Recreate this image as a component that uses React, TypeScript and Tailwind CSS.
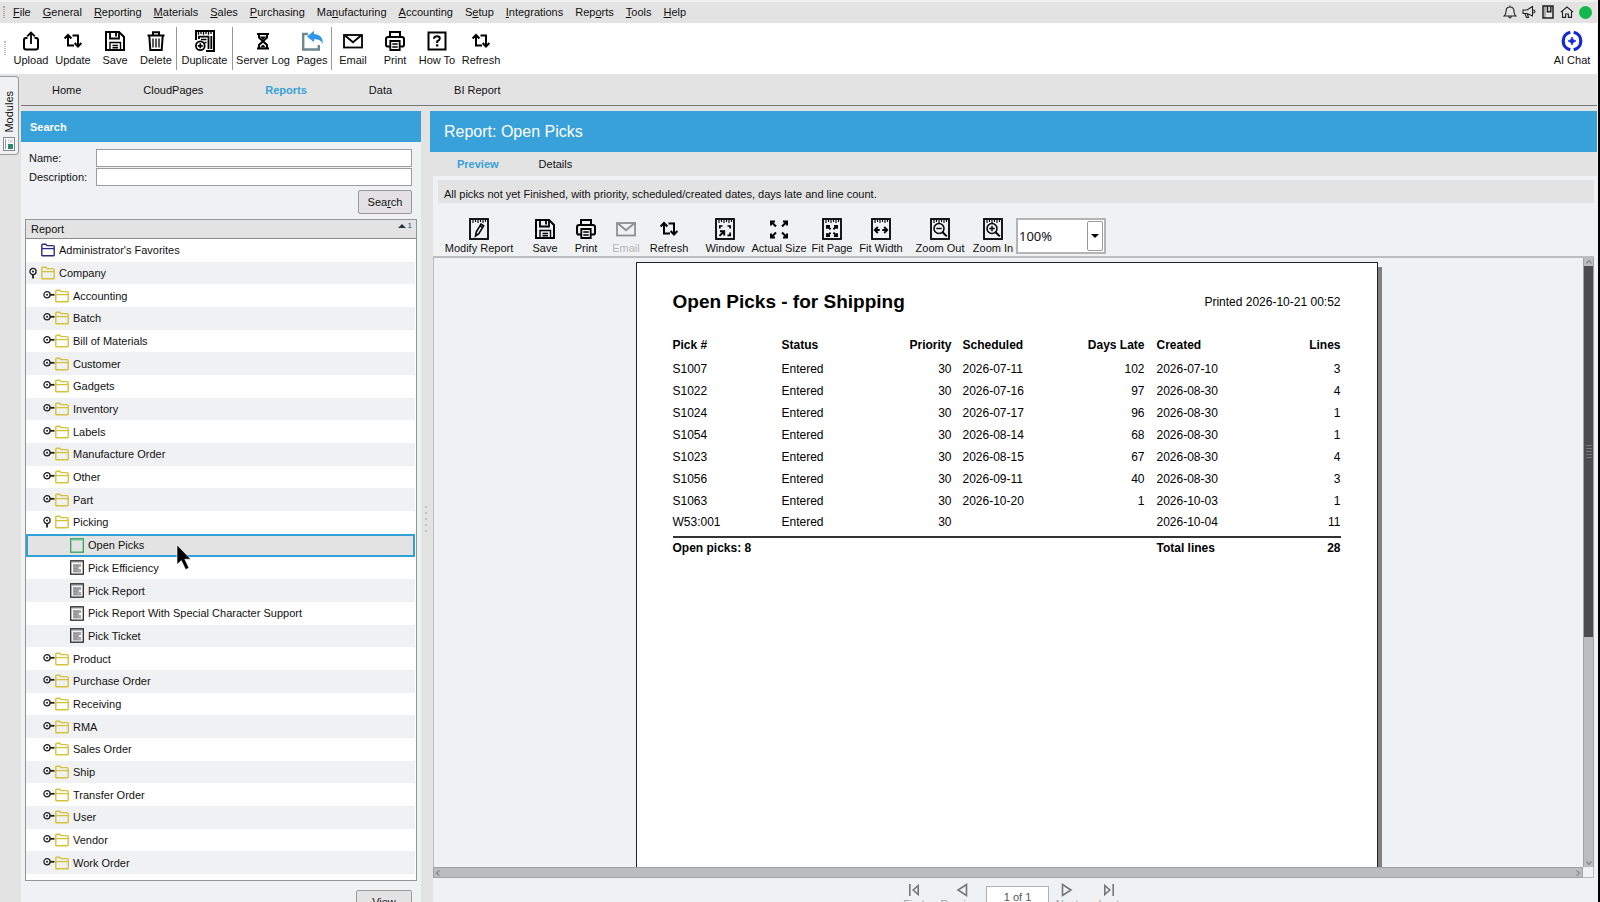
import type { ReactNode } from "react";

type IconProps = { children: ReactNode; className?: string };

function Icon({ children, className = "" }: IconProps) {
  return (
    <svg
      viewBox="0 0 22 22"
      className={`h-[22px] w-[22px] shrink-0 ${className}`}
      fill="none"
      stroke="currentColor"
      strokeWidth="2"
      aria-hidden="true"
    >
      {children}
    </svg>
  );
}

function NotepadFrame() {
  return (
    <>
      <rect x="2" y="1" width="18" height="20" strokeWidth="1.8" />
      <path d="M5 1.5V5M7.5 1.5V4M10 1.5V5M12.5 1.5V4M15 1.5V5M17.5 1.5V4" strokeWidth="1.1" />
    </>
  );
}

const UploadIcon = () => (
  <Icon>
    <path d="M7.5 8H6Q4 8 4 10V17.5Q4 19.5 6 19.5H16Q18 19.5 18 17.5V10Q18 8 16 8H14.5" />
    <path d="M11 14V3M7.2 6.3L11 2.5L14.8 6.3" strokeWidth="1.8" />
  </Icon>
);

const RefreshIcon = () => (
  <Icon>
    <path d="M6 5.5V15.5H12M2.6 8.5L6 5L9.4 8.5" />
    <path d="M10.5 5.5H16V15.5M12.6 13L16 16.5L19.4 13" />
  </Icon>
);

const SaveIcon = () => (
  <Icon>
    <path d="M2 2H15L20 7V20H2Z" />
    <path d="M6 2V8.5H15V2M12 3V6.5" strokeWidth="1.8" />
    <path d="M6 20V12.5H16.5V20M8.5 15.5H14M8.5 17.8H14" strokeWidth="1.4" />
  </Icon>
);

const TrashIcon = () => (
  <Icon>
    <path d="M2.5 5.5H19.5M8 5V2.2H14V5" />
    <path d="M4.3 6L5.3 20H16.7L17.7 6" />
    <path d="M8 8.5V17.5M11 8.5V17.5M14 8.5V17.5" strokeWidth="1.3" />
  </Icon>
);

const DuplicateIcon = () => (
  <Icon>
    <path d="M2 10V1H20V21H12" strokeWidth="2" />
    <path d="M4.5 1V4.8M7 1V4M9.5 1V4.8M12 1V4M14.5 1V4.8M17 1V4" strokeWidth="1.3" />
    <path d="M5 9V6.7H14.5V19M17.3 6V19" strokeWidth="1.8" />
    <path d="M7 9.5H12.5M10.5 12.5H12.5" strokeWidth="1.5" />
    <circle cx="6.3" cy="15.8" r="4.4" strokeWidth="1.8" fill="white" />
    <path d="M6.3 13.3V18.3M3.8 15.8H8.8" strokeWidth="1.7" />
  </Icon>
);

const HourglassIcon = () => (
  <Icon>
    <path d="M5 4H17M5 18.5H17" strokeWidth="2.2" />
    <path d="M7 5V7.5L15 15V18M15 5V7.5L7 15V18" strokeWidth="2" />
    <path d="M8 6.5H14L11 10ZM8 17.5L11 14.5L14 17.5Z" fill="currentColor" stroke="none" />
  </Icon>
);

const PagesIcon = () => (
  <Icon>
    <path d="M7 4H2.2V19.5H17.8V15" stroke="#6f8790" strokeWidth="2.4" />
    <path
      d="M6 6.5L13 0.8V4C18.5 4.2 21.8 7 22 14C20.2 10.5 17.5 9.3 13 9.3V12.2Z"
      fill="#2f97e8"
      stroke="none"
    />
  </Icon>
);

const MailIcon = () => (
  <Icon>
    <rect x="2" y="5" width="18" height="12.5" strokeWidth="1.8" />
    <path d="M3 5.5L11 12.3L19 5.5" strokeWidth="1.8" />
  </Icon>
);

const PrintIcon = () => (
  <Icon>
    <path d="M6 6.5V2H16V6.5" />
    <path d="M6 16.5H3.8Q2 16.5 2 14.7V9.3Q2 7 4.3 7H17.7Q20 7 20 9.3V14.7Q20 16.5 18.2 16.5H16" />
    <path d="M6.3 11H15.7V20H6.3Z" strokeWidth="1.8" />
    <path d="M8.3 14H13.7M8.3 17H13.7" strokeWidth="1.4" />
  </Icon>
);

const HelpIcon = () => (
  <Icon>
    <rect x="2.5" y="2.5" width="17" height="17" strokeWidth="2" />
    <path d="M8 8.8Q8 6.2 11 6.2Q13.8 6.2 13.8 8.5Q13.8 10 11.2 11.3V13" strokeWidth="2" />
    <path d="M10 14.3H12.3V16.5H10Z" fill="currentColor" stroke="none" />
  </Icon>
);

const ModifyIcon = () => (
  <Icon>
    <NotepadFrame />
    <path d="M7.5 18L8.2 14L13 6.2L15.6 7.8L10.8 15.6Z" strokeWidth="1.6" />
    <path d="M12 8L14.6 9.6" strokeWidth="1.2" />
  </Icon>
);

const WindowIcon = () => (
  <Icon>
    <NotepadFrame />
    <path d="M5.8 10.5V8H8.5M13.5 8H16.2V10.5M16.2 14.5V17.3H13.5" strokeWidth="1.7" />
    <path d="M5.5 17.8L9.5 13.8M6 13.2H10.2V17.5" strokeWidth="1.9" />
  </Icon>
);

const ActualSizeIcon = () => (
  <Icon>
    <path d="M3 7.5V3.5H7M3.2 3.7L8 8.5M15 3.5H19V7.5M18.8 3.7L14 8.5M3 15.5V19.5H7M3.2 19.3L8 14.5M15 19.5H19V15.5M18.8 19.3L14 14.5" />
  </Icon>
);

const FitPageIcon = () => (
  <Icon>
    <NotepadFrame />
    <path
      d="M6 10.7V8H9M6 8L9.6 11.2M13 8H16V10.7M16 8L12.4 11.2M6 15.3V18H9M6 18L9.6 14.6M13 18H16V15.3M16 18L12.4 14.6"
      strokeWidth="1.9"
    />
  </Icon>
);

const FitWidthIcon = () => (
  <Icon>
    <NotepadFrame />
    <path d="M5 12H9.7M17 12H12.3M7.8 9L4.8 12L7.8 15M14.2 9L17.2 12L14.2 15" strokeWidth="1.8" />
  </Icon>
);

function ZoomIcon({ plus }: { plus?: boolean }) {
  return (
    <Icon>
      <NotepadFrame />
      <circle cx="10" cy="10.5" r="5" strokeWidth="1.5" fill="#f0f1f3" />
      <path d="M13.6 14.2L17.8 18.4" strokeWidth="2" />
      <path d={plus ? "M7.3 10.5H12.7M10 7.8V13.2" : "M7.3 10.5H12.7"} strokeWidth="1.4" />
    </Icon>
  );
}

type Tool = { label: string; icon: ReactNode; width: string; disabled?: boolean };

function ToolButton({ label, icon, width, disabled }: Tool) {
  return (
    <button
      type="button"
      disabled={disabled}
      className={`flex shrink-0 flex-col items-center gap-px whitespace-nowrap leading-[14px] ${width} ${
        disabled ? "text-[#b5b5b5]" : ""
      }`}
    >
      <span className={disabled ? "text-[#8f8f8f]" : "text-black"}>{icon}</span>
      {label}
    </button>
  );
}

const menus: [string, string, string][] = [
  ["", "F", "ile"],
  ["", "G", "eneral"],
  ["", "R", "eporting"],
  ["", "M", "aterials"],
  ["", "S", "ales"],
  ["", "P", "urchasing"],
  ["Ma", "n", "ufacturing"],
  ["", "A", "ccounting"],
  ["S", "e", "tup"],
  ["", "I", "ntegrations"],
  ["Rep", "o", "rts"],
  ["", "T", "ools"],
  ["", "H", "elp"],
];

const mainTools: Tool[][] = [
  [
    { label: "Upload", icon: <UploadIcon />, width: "w-[42px]" },
    { label: "Update", icon: <RefreshIcon />, width: "w-[42px]" },
    { label: "Save", icon: <SaveIcon />, width: "w-[42px]" },
    { label: "Delete", icon: <TrashIcon />, width: "w-[40px]" },
  ],
  [{ label: "Duplicate", icon: <DuplicateIcon />, width: "w-[55px]" }],
  [
    { label: "Server Log", icon: <HourglassIcon />, width: "w-[60px]" },
    { label: "Pages", icon: <PagesIcon />, width: "w-[38px]" },
  ],
  [
    { label: "Email", icon: <MailIcon />, width: "w-[42px]" },
    { label: "Print", icon: <PrintIcon />, width: "w-[42px]" },
    { label: "How To", icon: <HelpIcon />, width: "w-[42px]" },
    { label: "Refresh", icon: <RefreshIcon />, width: "w-[46px]" },
  ],
];

const reportTools: Tool[][] = [
  [{ label: "Modify Report", icon: <ModifyIcon />, width: "w-[78px]" }],
  [
    { label: "Save", icon: <SaveIcon />, width: "w-[42px]" },
    { label: "Print", icon: <PrintIcon />, width: "w-[40px]" },
    { label: "Email", icon: <MailIcon />, width: "w-[40px]", disabled: true },
    { label: "Refresh", icon: <RefreshIcon />, width: "w-[46px]" },
  ],
  [
    { label: "Window", icon: <WindowIcon />, width: "w-[54px]" },
    { label: "Actual Size", icon: <ActualSizeIcon />, width: "w-[54px]" },
    { label: "Fit Page", icon: <FitPageIcon />, width: "w-[52px]" },
    { label: "Fit Width", icon: <FitWidthIcon />, width: "w-[46px]" },
  ],
  [
    { label: "Zoom Out", icon: <ZoomIcon />, width: "w-[60px]" },
    { label: "Zoom In", icon: <ZoomIcon plus />, width: "w-[46px]" },
  ],
];

type Node = { name: string; level: 0 | 1 | 2; kind: "favorites" | "folder" | "report"; open?: boolean };

const folder = (name: string): Node => ({ name, level: 1, kind: "folder" });
const report = (name: string): Node => ({ name, level: 2, kind: "report" });

const nodes: Node[] = [
  { name: "Administrator's Favorites", level: 0, kind: "favorites" },
  { name: "Company", level: 0, kind: "folder", open: true },
  ...[
    "Accounting",
    "Batch",
    "Bill of Materials",
    "Customer",
    "Gadgets",
    "Inventory",
    "Labels",
    "Manufacture Order",
    "Other",
    "Part",
  ].map(folder),
  { name: "Picking", level: 1, kind: "folder", open: true },
  ...["Open Picks", "Pick Efficiency", "Pick Report", "Pick Report With Special Character Support", "Pick Ticket"].map(
    report,
  ),
  ...[
    "Product",
    "Purchase Order",
    "Receiving",
    "RMA",
    "Sales Order",
    "Ship",
    "Transfer Order",
    "User",
    "Vendor",
    "Work Order",
  ].map(folder),
];

function FolderIcon({ color }: { color: string }) {
  return (
    <svg viewBox="0 0 14 14" className={`h-[14px] w-[14px] shrink-0 ${color}`} fill="none" stroke="currentColor" aria-hidden="true">
      <path d="M0.8 12V2.2Q0.8 1.2 1.8 1.2H4.8L6 2.6H12Q13.2 2.6 13.2 3.8V12Q13.2 12.8 12.2 12.8H1.8Q0.8 12.8 0.8 12Z" strokeWidth="1.4" />
      <path d="M1 5.6H13" strokeWidth="1.3" />
    </svg>
  );
}

function ReportIcon({ selected }: { selected: boolean }) {
  return (
    <svg
      viewBox="0 0 14 15"
      className={`h-[15px] w-[14px] shrink-0 ${selected ? "text-[#2fa45c]" : "text-[#2b2b2b]"}`}
      fill="none"
      stroke="currentColor"
      aria-hidden="true"
    >
      <rect x="0.7" y="0.8" width="12.6" height="13.4" strokeWidth="1.3" />
      <path d="M2.5 2H12" strokeWidth="1.2" strokeDasharray="1 1" />
      {!selected && (
        <>
          <path d="M3 4H11V7H9V9H11V12.5H3Z" fill="#a5a5a5" stroke="none" />
          <path d="M4 6H8M4 8.5H7M4 11H7" stroke="#8c8c8c" strokeWidth="1" />
        </>
      )}
    </svg>
  );
}

function Handle({ open }: { open?: boolean }) {
  return (
    <svg viewBox="0 0 12 12" className="h-3 w-3" fill="none" stroke="#222" aria-hidden="true">
      {open ? (
        <>
          <circle cx="4" cy="4.5" r="3.1" strokeWidth="1.3" />
          <path d="M4 7.5V11.5" strokeWidth="1.8" />
          <circle cx="4" cy="4.5" r="1" fill="#222" stroke="none" />
        </>
      ) : (
        <>
          <circle cx="4" cy="4.8" r="3.1" strokeWidth="1.3" />
          <path d="M7 4.8H11.5" strokeWidth="1.8" />
          <circle cx="4" cy="4.8" r="1" fill="#222" stroke="none" />
        </>
      )}
    </svg>
  );
}

const indents = ["pl-[3px]", "pl-[17px]", "pl-[32px]"];

function TreeRow({ node, index }: { node: Node; index: number }) {
  const selected = node.name === "Open Picks";
  return (
    <li
      role="treeitem"
      aria-level={node.level + 1}
      aria-selected={selected}
      className={`relative flex min-h-0 items-center ${selected ? "bg-[#e3e3e3] outline-2 -outline-offset-2 outline-[#2fa1d9]" : index % 2 ? "bg-[#f0f1f3]" : "bg-white"} ${indents[node.level]}`}
    >
      <span className="flex w-3 shrink-0">
        {node.kind === "folder" && (
          <button type="button" aria-label={`Toggle ${node.name}`}>
            <Handle open={node.open} />
          </button>
        )}
      </span>
      <button type="button" className="flex items-center gap-1 whitespace-nowrap">
        {node.kind === "report" ? (
          <ReportIcon selected={selected} />
        ) : (
          <FolderIcon color={node.kind === "favorites" ? "text-[#2f2a80]" : "text-[#d3c33a]"} />
        )}
        {node.name}
      </button>
      {selected && (
        <svg viewBox="0 0 16 28" className="absolute top-2.5 left-[150px] z-10 h-7 w-4" aria-hidden="true">
          <path d="M1 1V20.5L5.3 16.6L9.6 25.6L13 24L8.8 15.2H14.8Z" fill="#000" stroke="#fff" strokeWidth="0.6" />
        </svg>
      )}
    </li>
  );
}

function SearchPanel() {
  return (
    <section className="flex flex-col bg-[#f0f1f3]">
      <h2 className="flex h-[31px] items-center bg-[#38a1d9] px-[9px] font-bold text-white">Search</h2>
      <form className="grid grid-cols-[67px_1fr] items-center gap-y-px pt-[7px] pr-[9px] pl-2">
        <label htmlFor="name">Name:</label>
        <input id="name" className="h-[18px] border border-[#9c9c9c] bg-white px-1" />
        <label htmlFor="description">Description:</label>
        <input id="description" className="h-[18px] border border-[#9c9c9c] bg-white px-1" />
        <button
          type="button"
          className="col-span-2 mt-[3px] h-6 w-[54px] justify-self-end rounded-xs border border-[#9a9a9a] bg-[#e3e1e3]"
        >
          Sea<u>r</u>ch
        </button>
      </form>
      <div className="mt-[5px] mr-1 ml-1 border border-[#949494] bg-white pb-1.5">
        <button
          type="button"
          className="flex h-[19px] w-full items-center justify-between border-b border-[#8a8a8a] bg-[#e3e3e3] pr-1 pl-[5px]"
        >
          Report
          <span className="flex items-center gap-0.5 self-start text-[8px] leading-[11px] text-[#2b4f6b]">
            <svg viewBox="0 0 8 4" className="h-1 w-2" aria-hidden="true">
              <path d="M0 4L4 0L8 4Z" fill="#20384a" />
            </svg>
            1
          </span>
        </button>
        <ul role="tree" aria-label="Reports" className="mr-px grid h-[635px] auto-rows-fr">
          {nodes.map((n, i) => (
            <TreeRow key={n.name} node={n} index={i} />
          ))}
        </ul>
      </div>
      <div className="flex justify-end pt-[9px] pr-[9px] pb-3">
        <button type="button" className="h-6 w-[56px] rounded-xs border border-[#9a9a9a] bg-[#e3e3e3]">
          View
        </button>
      </div>
    </section>
  );
}

const picks: string[][] = [
  ["S1007", "Entered", "30", "2026-07-11", "102", "2026-07-10", "3"],
  ["S1022", "Entered", "30", "2026-07-16", "97", "2026-08-30", "4"],
  ["S1024", "Entered", "30", "2026-07-17", "96", "2026-08-30", "1"],
  ["S1054", "Entered", "30", "2026-08-14", "68", "2026-08-30", "1"],
  ["S1023", "Entered", "30", "2026-08-15", "67", "2026-08-30", "4"],
  ["S1056", "Entered", "30", "2026-09-11", "40", "2026-08-30", "3"],
  ["S1063", "Entered", "30", "2026-10-20", "1", "2026-10-03", "1"],
  ["W53:001", "Entered", "30", "", "", "2026-10-04", "11"],
];

const headings = ["Pick #", "Status", "Priority", "Scheduled", "Days Late", "Created", "Lines"];
const align = ["text-left", "text-left", "text-right", "text-left pl-[11px]", "text-right", "text-left pl-3", "text-right"];

function ReportPage() {
  return (
    <article className="w-[742px] shrink-0 border border-b-0 border-[#222] bg-white px-9 pt-[27px] text-[12px] text-black shadow-[4px_5px_0_#808080]">
      <header className="flex h-6 items-center justify-between">
        <h3 className="text-[19px] font-bold">Open Picks - for Shipping</h3>
        <p>Printed 2026-10-21 00:52</p>
      </header>
      <table className="mt-[18px] w-full table-fixed border-collapse">
        <colgroup>
          <col className="w-[109px]" />
          <col className="w-[90px]" />
          <col className="w-[80px]" />
          <col className="w-[103px]" />
          <col className="w-[90px]" />
          <col className="w-[99px]" />
          <col />
        </colgroup>
        <thead>
          <tr className="h-[26px]">
            {headings.map((h, i) => (
              <th key={h} scope="col" className={`p-0 ${align[i]}`}>
                {h}
              </th>
            ))}
          </tr>
        </thead>
        <tbody>
          {picks.map((row) => (
            <tr key={row[0]} className="group h-[22px] last:h-[25px]">
              {row.map((cell, i) => (
                <td key={i} className={`p-0 group-last:pb-1 ${align[i]}`}>
                  {cell}
                </td>
              ))}
            </tr>
          ))}
        </tbody>
        <tfoot>
          <tr className="h-[20px] border-t-2 border-[#333] font-bold">
            <td className="p-0" colSpan={5}>
              Open picks: 8
            </td>
            <td className="p-0 pl-3">Total lines</td>
            <td className="p-0 text-right">28</td>
          </tr>
        </tfoot>
      </table>
    </article>
  );
}

function Chevron({ turn }: { turn: string }) {
  return (
    <svg viewBox="0 0 8 8" className={`h-2 w-2 ${turn}`} fill="none" stroke="#8b8b8b" aria-hidden="true">
      <path d="M1.5 5.5L4 2.5L6.5 5.5" strokeWidth="1.3" />
    </svg>
  );
}

function PagerButton({ label, path, width }: { label: string; path: string; width: string }) {
  return (
    <button type="button" className={`flex flex-col items-center text-[#a0a0a0] ${width}`}>
      <svg viewBox="0 0 14 14" className="h-[14px] w-[14px]" fill="none" stroke="#777" strokeWidth="1.6" aria-hidden="true">
        <path d={path} />
      </svg>
      <span className="leading-[14px]">{label}</span>
    </button>
  );
}

function ReportPanel() {
  return (
    <section className="flex min-w-0 flex-col">
      <h1 className="flex h-[41px] items-center bg-[#38a1d9] pl-[14px] text-[16px] text-white">Report: Open Picks</h1>
      <nav className="flex h-6 items-center gap-10 pl-[27px]">
        <a href="#preview" className="font-bold text-[#38a1d9]">
          Preview
        </a>
        <a href="#details">Details</a>
      </nav>
      <div className="ml-[3px] flex min-h-0 flex-1 flex-col bg-[#f0f1f3] pt-1 pr-[3px]">
        <p className="ml-[5px] flex h-[23px] items-end bg-[#e3e3e3] pb-0.5 pl-1.5">
          All picks not yet Finished, with priority, scheduled/created dates, days late and line count.
        </p>
        <div className="flex h-[53px] items-start pt-[15px] pl-[7px]">
          {reportTools.map((group, i) => (
            <div key={i} className="mr-1.5 flex last-of-type:mr-0">
              {group.map((t) => (
                <ToolButton key={t.label} {...t} />
              ))}
            </div>
          ))}
          <span className="relative flex h-9 w-[90px] shrink-0 border-2 border-[#b4b4b4] bg-white">
            <select
              aria-label="Zoom"
              className="w-full appearance-none bg-transparent pl-px font-['Noto_Sans',sans-serif] text-[13px]"
            >
              <option>100%</option>
            </select>
            <span className="pointer-events-none absolute inset-y-px right-px flex w-4 items-center justify-center rounded-xs border border-[#999]">
              <svg viewBox="0 0 8 4" className="h-1 w-2" aria-hidden="true">
                <path d="M0 0H8L4 4Z" fill="#000" />
              </svg>
            </span>
          </span>
        </div>
        <div className="flex min-h-0 flex-1 border-t-2 border-l border-[#bdbdbd]">
          <div className="flex min-w-0 flex-1 justify-center overflow-hidden pt-1 pr-1">
            <ReportPage />
          </div>
          <div className="flex w-[11px] flex-col items-center border-x border-[#a2a2a2] bg-[#bbbcbd]">
            <Chevron turn="" />
            <div className="flex h-[371px] w-full flex-col items-center justify-center gap-0.5 bg-[#4c4c4e]">
              {[0, 1, 2, 3, 4].map((n) => (
                <span key={n} className="h-px w-1.5 bg-[#77777a]" />
              ))}
            </div>
            <span className="flex-1" />
            <Chevron turn="rotate-180" />
          </div>
        </div>
        <div className="flex h-[11px] items-center">
          <div className="flex h-full flex-1 items-center justify-between border border-[#a2a2a2] bg-[#bbbcbd]">
            <Chevron turn="-rotate-90" />
            <Chevron turn="rotate-90" />
          </div>
          <span className="h-full w-[11px] border-r border-b border-[#bbb]" />
        </div>
        <div className="flex h-12 items-start justify-center pt-[5px] pr-1">
          <PagerButton label="First" path="M2.8 1V13M11.2 2.5V11.5L6.2 7Z" width="w-12" />
          <PagerButton label="Previous" path="M11.5 1.5V12.5L3 7Z" width="w-12" />
          <input
            aria-label="Page"
            defaultValue="1 of 1"
            className="mt-[3px] h-[22px] w-[63px] border border-[#b0b0b0] bg-white text-center text-[#555]"
          />
          <PagerButton label="Next" path="M2.5 1.5V12.5L11 7Z" width="w-9" />
          <PagerButton label="Last" path="M2.8 2.5V11.5L7.8 7ZM11.2 1V13" width="w-12" />
        </div>
      </div>
    </section>
  );
}

function StatusIcons() {
  return (
    <div className="ml-auto flex items-center gap-[5px] pr-[5px] text-[#222]">
      <button type="button" aria-label="Notifications">
        <svg viewBox="0 0 14 14" className="h-[14px] w-[14px]" fill="none" stroke="currentColor" strokeWidth="1.1">
          <path d="M1.2 11Q3 9.5 3 6.5Q3 2 7 2Q11 2 11 6.5Q11 9.5 12.8 11ZM5.8 11.5Q6 13 7 13Q8 13 8.2 11.5M7 2V0.6" />
        </svg>
      </button>
      <button type="button" aria-label="Announcements">
        <svg viewBox="0 0 14 14" className="h-[14px] w-[14px]" fill="none" stroke="currentColor" strokeWidth="1.1">
          <path d="M1 5H5L10.5 1.5V11L5 8.5H1ZM3 8.7L4.5 12.5H6.5L5.3 8.8M11 5Q13 5 13 6.5Q13 8 11 8" />
        </svg>
      </button>
      <button type="button" aria-label="Bookmarks">
        <svg viewBox="0 0 14 14" className="h-[14px] w-[14px]" fill="none" stroke="currentColor" strokeWidth="1.5">
          <path d="M2 1H12V13H2ZM6.5 1V6.8H9.8V1" />
          <path d="M4 1V13" strokeWidth="0.6" />
        </svg>
      </button>
      <button type="button" aria-label="Home page">
        <svg viewBox="0 0 14 14" className="h-[14px] w-[14px]" fill="none" stroke="currentColor" strokeWidth="1.1">
          <path d="M0.8 7.2L7 2L13.2 7.2M2.5 6.5V12.4H5.6V9H8.4V12.4H11.5V6.5" />
        </svg>
      </button>
      <span className="h-[13px] w-[13px] rounded-full bg-[#12b84c]" />
    </div>
  );
}

const mainTabs = ["Home", "CloudPages", "Reports", "Data", "BI Report"];

export default function App() {
  return (
    <div className="flex h-screen overflow-hidden bg-black font-['Liberation_Sans',Arial,sans-serif] text-[11px] leading-[14px] text-[#111]">
      <div className="mr-0.5 flex min-w-0 flex-1 flex-col border-r border-[#f0eded] bg-[#e3e3e3]">
        <div className="flex h-[23px] shrink-0 items-center border-t-2 border-[#f0f0f0] pb-px">
          <span className="mr-2 ml-[3px] h-3 w-0.5 border-x border-dotted border-[#aaa]" />
          <nav className="flex gap-3">
            {menus.map(([pre, key, post]) => (
              <button type="button" key={pre + key + post}>
                {pre}
                <u>{key}</u>
                {post}
              </button>
            ))}
          </nav>
          <StatusIcons />
        </div>

        <div className="flex h-[51px] shrink-0 items-start bg-white pt-1.5 pr-[3px]">
          <span className="mt-3 mr-[3px] ml-1 h-3.5 w-0.5 border-x border-dotted border-[#bbb]" />
          {mainTools.map((group, i) => (
            <div key={i} className="-mt-0.5 flex h-[43px] border-l border-[#999] pt-[3px] first-of-type:border-transparent">
              {group.map((t) => (
                <ToolButton key={t.label} {...t} />
              ))}
            </div>
          ))}
          <button type="button" className="ml-auto flex w-11 flex-col items-center gap-px pt-px leading-[14px]">
            <svg viewBox="0 0 22 22" className="h-[22px] w-[22px]" fill="none" stroke="#1428d8" aria-hidden="true">
              <path d="M9.3 2.2A9 9 0 0 0 9.3 19.8M12.7 2.2A9 9 0 0 1 12.7 19.8" strokeWidth="3.2" />
              <path d="M11 7Q11.6 10.4 15 11Q11.6 11.6 11 15Q10.4 11.6 7 11Q10.4 10.4 11 7Z" fill="#1428d8" strokeWidth="0.8" />
            </svg>
            AI Chat
          </button>
        </div>

        <div className="flex min-h-0 flex-1">
          <aside className="w-[21px] shrink-0 pt-0.5">
            <button
              type="button"
              className="flex h-[79px] w-[19px] flex-col items-center justify-between rounded-r-sm border border-l-0 border-[#999] bg-[#f0f1f3] pt-[14px] pb-[3px]"
            >
              <span className="rotate-180 [writing-mode:vertical-rl]">Modules</span>
              <svg viewBox="0 0 12 14" className="h-[14px] w-3" aria-hidden="true">
                <rect x="0.5" y="0.5" width="11" height="13" fill="#fff" stroke="#888" />
                <path d="M2.5 2V12" stroke="#999" />
                <path d="M5 3H10M5 5H10" stroke="#b5c4c9" />
                <rect x="5" y="7" width="5" height="5" fill="#2c8a6c" />
              </svg>
            </button>
          </aside>
          <div className="flex min-w-0 flex-1 flex-col">
            <nav className="flex h-8 shrink-0 items-center border-b border-[#777]">
              {mainTabs.map((t) => (
                <a
                  key={t}
                  href={`#${t}`}
                  className={t === "Reports" ? "px-[31px] font-bold text-[#38a1d9]" : "px-[31px]"}
                >
                  {t}
                </a>
              ))}
            </nav>
            <main className="mt-[5px] grid shrink-0 grid-cols-[400px_9px_1fr]">
              <SearchPanel />
              <div className="flex flex-col items-center justify-center gap-1">
                {[0, 1, 2, 3, 4].map((n) => (
                  <span key={n} className="h-0.5 w-0.5 rounded-full bg-[#b5b5b5]" />
                ))}
              </div>
              <ReportPanel />
            </main>
          </div>
        </div>
      </div>
    </div>
  );
}
